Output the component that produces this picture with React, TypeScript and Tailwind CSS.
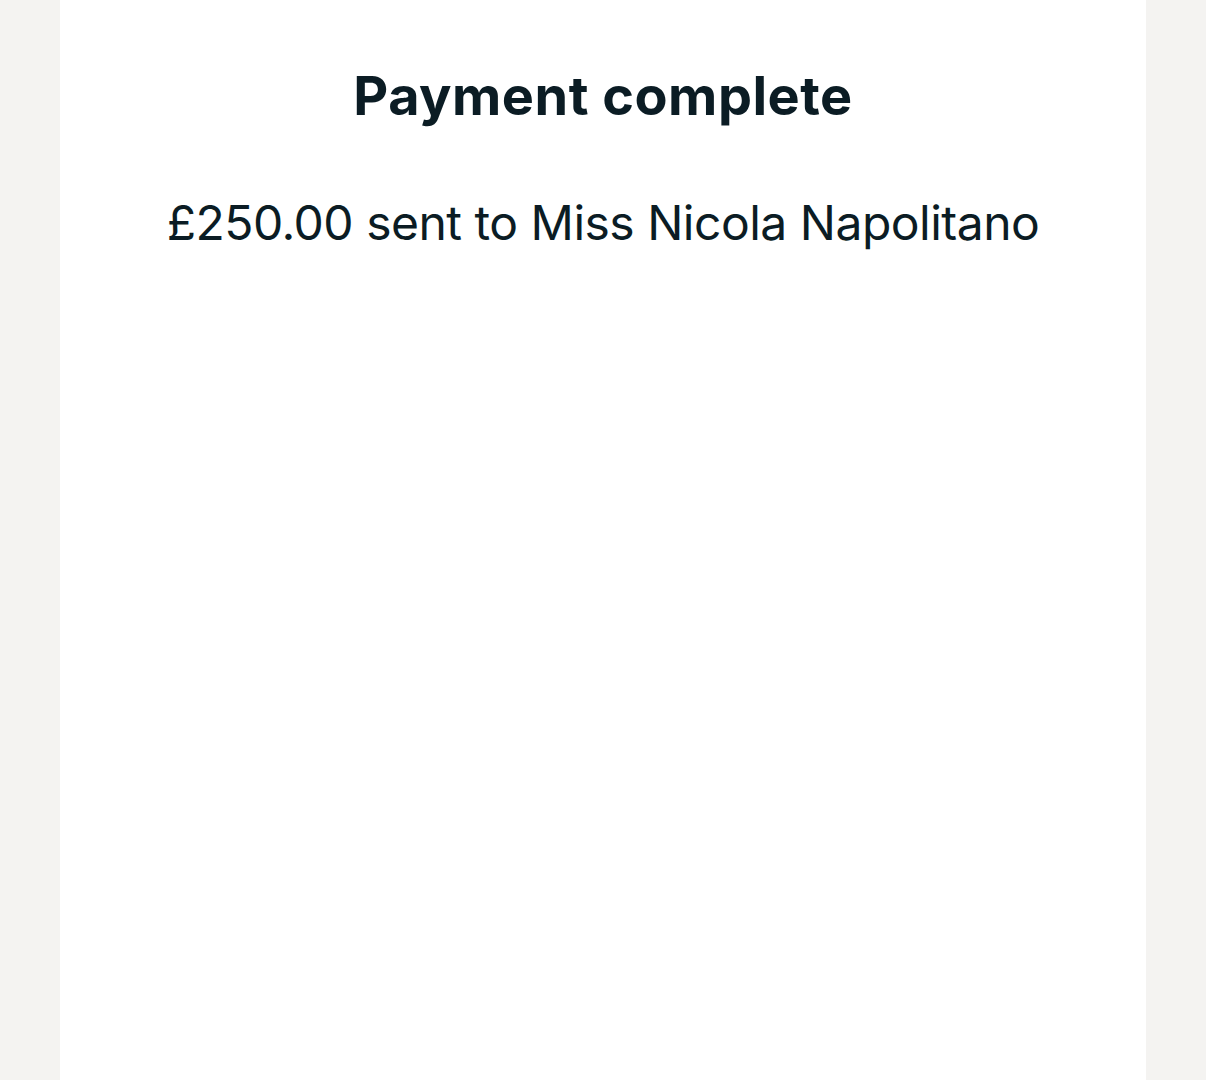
import React from "react";

export default function App() {
  return (
    <div className="min-h-screen bg-[#f4f3f1]" style={{ fontFamily: "Inter, 'Noto Sans', sans-serif" }}>
      <div className="mx-auto min-h-screen w-[1086px] bg-white px-10 pt-[61px] text-center text-[#0b1c24]">
        <h1 className="text-[54px] font-bold leading-[70px] tracking-[0.5px]">Payment complete</h1>
        <p className="mt-[62px] text-[48px] font-normal leading-[60px] tracking-[-0.5px]">
          £250.00 sent to Miss Nicola Napolitano
        </p>
      </div>
    </div>
  );
}
